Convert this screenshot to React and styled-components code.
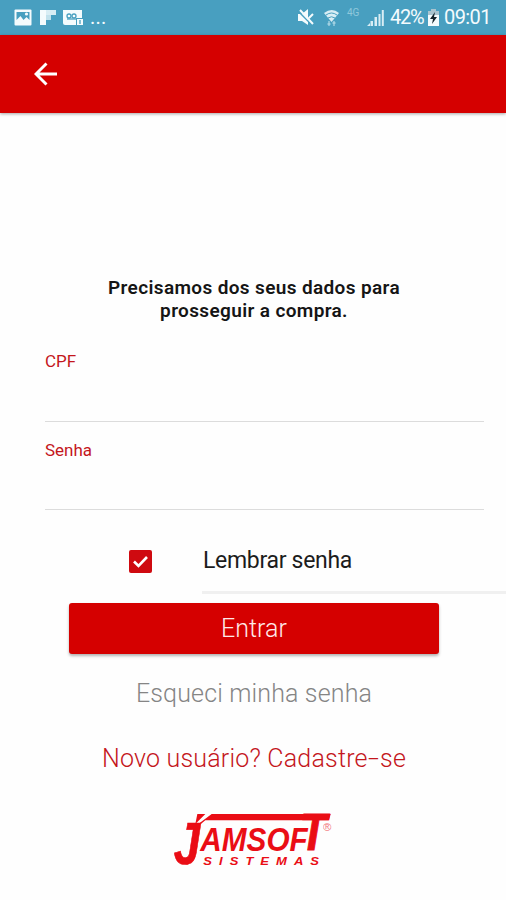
import React from 'react'
import styled, { createGlobalStyle } from 'styled-components'

const GlobalStyle = createGlobalStyle`
	* {
		box-sizing: border-box;
	}

	body {
		margin: 0;
		background: #fefefe;
		font-family: Roboto, 'Liberation Sans', sans-serif;
	}
`

const Screen = styled.div`
	width: 506px;
	height: 900px;
	display: flex;
	flex-direction: column;
	overflow: hidden;
	background: #fefefe;
`

const StatusBar = styled.div`
	height: 35px;
	flex-shrink: 0;
	display: flex;
	justify-content: space-between;
	padding: 0 15px 0 13px;
	background: #489fc0;
	color: #f4fbfd;
`

const StatusGroup = styled.div`
	display: flex;
	align-items: center;
`

const StatusIcon = styled.svg`
	display: block;
	flex-shrink: 0;
	margin-right: ${props => props.$gap || 0}px;
`

const StatusText = styled.span`
	width: ${props => props.$width}px;
	font-size: 20px;
	line-height: 37px;
	letter-spacing: ${props => props.$spacing || 0}px;
	white-space: nowrap;
`

const Network = styled.span`
	width: 20px;
	font-size: 10px;
	line-height: 12px;
	margin-top: -10px;
	color: #8fc8dc;
`

const Header = styled.header`
	height: 78px;
	flex-shrink: 0;
	display: flex;
	align-items: center;
	padding-left: 34px;
	background: #d50000;
	box-shadow: 0 1px 3px rgba(0, 0, 0, 0.35);
`

const BackButton = styled.button`
	display: flex;
	padding: 0;
	border: 0;
	background: none;
`

const Content = styled.main`
	display: flex;
	flex-direction: column;
	align-items: center;
	padding-top: 163px;
`

const Title = styled.h1`
	margin: 0;
	padding-left: 2px;
	font-size: 19px;
	font-weight: 600;
	line-height: 23px;
	letter-spacing: 0.36px;
	text-align: center;
	color: #151515;
`

const Form = styled.form`
	width: 100%;
	display: flex;
	flex-direction: column;
	padding: 22px 0 0 45px;
`

const Field = styled.label`
	width: 439px;
	height: ${props => props.$height}px;
	padding-top: ${props => props.$top}px;
	border-bottom: 1px solid #dcdcdc;
	font-size: 17px;
	line-height: 22px;
	color: #c4161c;
`

const Remember = styled.div`
	height: 84px;
	display: flex;
`

const Checkbox = styled.span`
	width: 23px;
	height: 23px;
	display: flex;
	align-items: center;
	justify-content: center;
	margin: 40px 50px 0 84px;
	border-radius: 2px;
	background: #cf0a10;
`

const RememberText = styled.span`
	flex: 1;
	padding: 37px 0 0 1px;
	border-bottom: 3px solid #f0f0f0;
	font-size: 23px;
	line-height: 28px;
	letter-spacing: -0.3px;
	color: #1c1c1c;
`

const Submit = styled.button`
	width: 370px;
	height: 51px;
	margin: 9px 0 0 24px;
	padding: 0;
	border: 0;
	border-radius: 3px;
	background: #d50000;
	box-shadow: 0 2px 3px rgba(0, 0, 0, 0.3);
	font-family: inherit;
	font-size: 25px;
	font-weight: 300;
	line-height: 51px;
	color: #ffe9e9;
`

const TextLink = styled.a`
	margin-top: ${props => props.$top}px;
	padding-left: 2px;
	font-size: 25px;
	font-weight: 300;
	line-height: 30px;
	letter-spacing: ${props => props.$spacing}px;
	white-space: nowrap;
	color: ${props => props.$color};
`

const Hyphen = styled.span`
	display: inline-block;
	margin: 0 3px 0 2px;
	transform: scaleX(1.6);
`

const LogoDrawing = styled.svg`
	display: block;
	margin: 26px 0 0 4px;
	overflow: visible;
	font-family: 'Liberation Sans', Arial, sans-serif;
	font-weight: 700;
	font-style: italic;
	fill: #ea0d15;
`

const Logo = () => (
	<LogoDrawing width="180" height="75" viewBox="0 0 540 225">
		<path d="M97 42H121L91 72ZM140 42H497L491 61H121L93 84L97 74Z" />
		<g transform="translate(26 192) scale(.8 1)" stroke="#ea0d15" strokeWidth="2">
			<text fontSize="178">J</text>
		</g>
		<text x="106" y="152" fontSize="102" textLength="322" lengthAdjust="spacingAndGlyphs">
			AMSOF
		</text>
		<g transform="translate(404 151) scale(.86 1)" stroke="#ea0d15" strokeWidth="3">
			<text fontSize="154">T</text>
		</g>
		<g transform="translate(115 194) scale(1.12 1)">
			<text fontSize="35" textLength="310" lengthAdjust="spacing">SISTEMAS</text>
		</g>
		<text x="474" y="94" fontSize="34" fontWeight="400" fontStyle="normal" opacity="0.6">®</text>
	</LogoDrawing>
)

const App = () => (
	<>
		<GlobalStyle />
		<Screen>
			<StatusBar>
				<StatusGroup>
					<StatusIcon width="20" height="20" viewBox="0 0 20 20" $gap="7">
						<rect x="1.5" y="1.5" width="17" height="16" rx="1" fill="#f4fbfd" />
						<path d="M3.5 4h13v8l-3-3-3 3-3-4-4 4z" fill="#489fc0" />
						<circle cx="13.5" cy="6" r="1.6" fill="#f4fbfd" />
					</StatusIcon>
					<StatusIcon width="17" height="20" viewBox="0 0 17 20" $gap="6">
						<path d="M0 2h6v15H0z" fill="#f4fbfd" />
						<path d="M6 2h10v5H6z" fill="#d8edf4" />
						<path d="M6 7h5v5H6z" fill="#c1e1ec" />
					</StatusIcon>
					<StatusIcon width="21" height="20" viewBox="0 0 21 20" $gap="6">
						<path d="M0 2h19v15H2q-2 0-2-2z" fill="#f4fbfd" />
						<g fill="none" stroke="#489fc0" strokeWidth="1.3">
							<circle cx="6" cy="8" r="2" />
							<circle cx="11" cy="8" r="2" />
							<path d="M4 11h10" />
						</g>
						<path d="M13 10h8v8h-8z" fill="#489fc0" />
						<path d="M14 11h6v6h-6z" fill="#f4fbfd" />
						<path d="M17 12v4" stroke="#489fc0" strokeWidth="1.3" />
					</StatusIcon>
					<StatusText $width="18" $spacing="0.2">...</StatusText>
				</StatusGroup>
				<StatusGroup>
					<StatusIcon width="18" height="20" viewBox="0 0 18 20" $gap="9">
						<path d="M1 6h4l6-5v16l-6-4H1z" fill="#f4fbfd" />
						<path d="M1 3l14 14" stroke="#489fc0" strokeWidth="1.6" />
						<path d="M3 2l13 14M12 10l4-4" stroke="#f4fbfd" strokeWidth="2" />
					</StatusIcon>
					<StatusIcon width="16" height="20" viewBox="0 0 16 20" $gap="7">
						<path d="M0 5q8-6 15 0l-7.5 9z" fill="#d8edf4" />
						<path d="M2 7q5.500-4 11 0M4 10q3.500-2.500 7 0" fill="none" stroke="#489fc0" />
						<path d="M5 13v5M3.500 16h3M10 18v-5M8.500 15h3" stroke="#a9d5e4" strokeWidth="1.3" />
					</StatusIcon>
					<Network>4G</Network>
					<StatusIcon width="17" height="20" viewBox="0 0 17 20" $gap="6">
						<path d="M0 18l3-3v3zM3.500 13h2.500v5H3.500zM7.500 9H10v9H7.500z" fill="#d8edf4" />
						<path d="M11.500 6h2v12h-2zM14.800 2h2v16h-2z" fill="#d8edf4" />
					</StatusIcon>
					<StatusText $width="38" $spacing="-1.2">42%</StatusText>
					<StatusIcon width="11" height="20" viewBox="0 0 11 20" $gap="5">
						<path d="M3 1h5v2h3v15H0V3h3z" fill="#f4fbfd" />
						<path d="M3 1h5v2h3v4H0V3h3z" fill="#a9c4cf" />
						<path d="M7 4L2 11h3l-1 5 5-7H6z" fill="#14242b" />
					</StatusIcon>
					<StatusText $width="47" $spacing="-0.6">09:01</StatusText>
				</StatusGroup>
			</StatusBar>
			<Header>
				<BackButton type="button" aria-label="Voltar">
					<svg width="24" height="24" viewBox="0 0 24 24" fill="none" stroke="#fff" strokeWidth="2.9">
						<path d="M23 12H3M12.500 1.500L2 12l10.500 10.500" />
					</svg>
				</BackButton>
			</Header>
			<Content>
				<Title>
					Precisamos dos seus dados para<br />prosseguir a compra.
				</Title>
				<Form>
					<Field $height={78} $top={6}>CPF</Field>
					<Field $height={88} $top={17}>Senha</Field>
					<Remember>
						<Checkbox>
							<svg width="17" height="15" viewBox="0 0 17 15" fill="none" stroke="#fff" strokeWidth="2.6">
								<path d="M2 7.500l4.500 4.500L15 3" />
							</svg>
						</Checkbox>
						<RememberText>Lembrar senha</RememberText>
					</Remember>
					<Submit type="button">Entrar</Submit>
				</Form>
				<TextLink $top={25} $spacing={0.15} $color="#858585">Esqueci minha senha</TextLink>
				<TextLink $top={35} $spacing={0.2} $color="#c4161c">
					Novo usuário? Cadastre<Hyphen>-</Hyphen>se
				</TextLink>
				<Logo />
			</Content>
		</Screen>
	</>
)

export default App
